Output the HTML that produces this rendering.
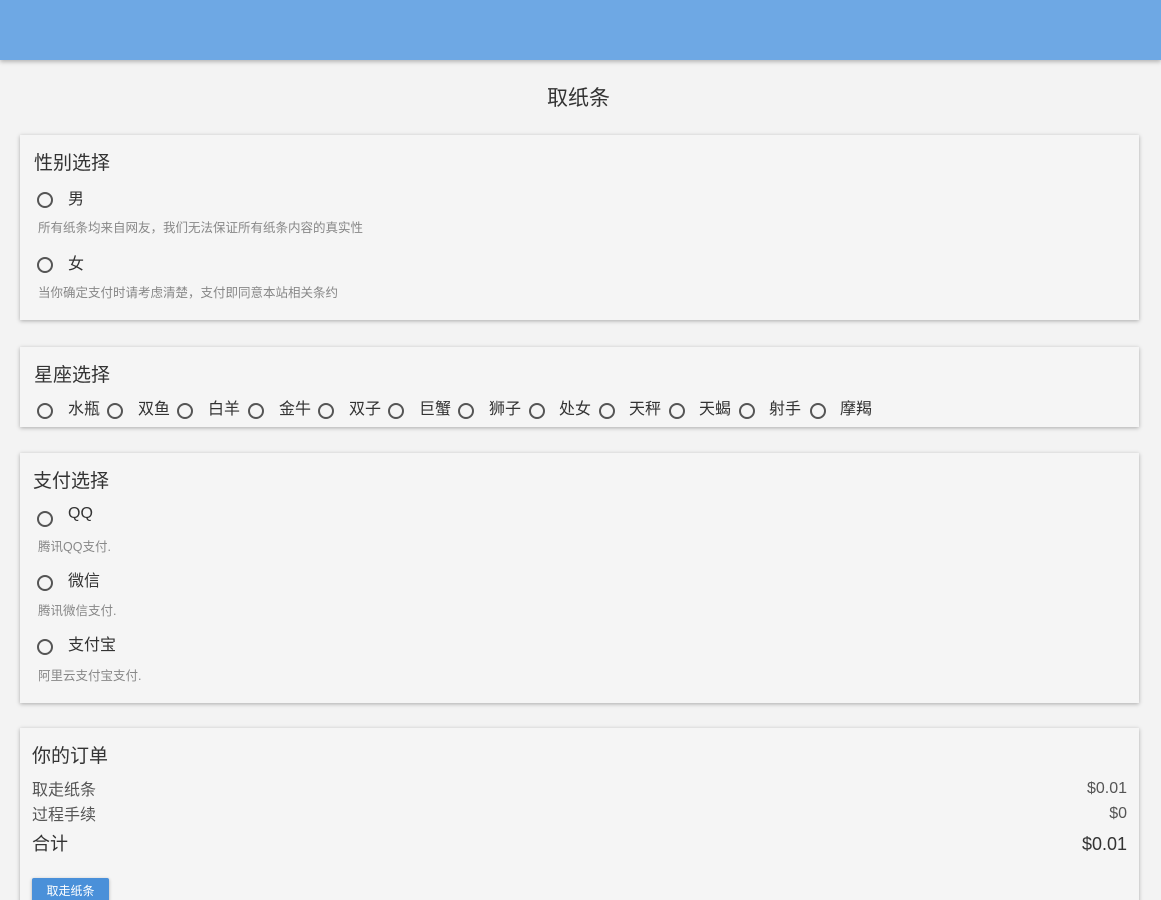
<!DOCTYPE html>
<html style="overflow:hidden"><head><meta charset="utf-8"><style>
html,body{height:900px}
body{margin:0;width:1161px;overflow:hidden;background:#f3f3f3;font-family:"Liberation Sans","Noto Sans CJK SC",sans-serif;color:#333;position:relative}
.a{position:absolute;white-space:nowrap}
.hd{position:absolute;left:0;top:0;width:1161px;height:60px;background:#6ea8e4;box-shadow:0 2px 4px rgba(0,0,0,.25)}
.card{position:absolute;left:20px;width:1119px;background:#f5f5f5;box-shadow:0 1px 4px rgba(0,0,0,.3)}
.r{position:absolute;width:12px;height:12px;border:2px solid #555;border-radius:50%}
.t{font-size:19px;color:#333}
.l{font-size:16px;color:#333}
.s{font-size:12.5px;color:#888}
</style></head><body>
<div class="hd"></div>
<div class="a" style="left:547px;top:82px;font-size:21px;color:#333">取纸条</div>

<div class="card" style="top:135px;height:185px"></div>
<div class="a t" style="left:34px;top:148px">性别选择</div>
<div class="r" style="left:37px;top:192px"></div><div class="a l" style="left:68px;top:185px">男</div>
<div class="a s" style="left:38px;top:217px">所有纸条均来自网友，我们无法保证所有纸条内容的真实性</div>
<div class="r" style="left:37px;top:257px"></div><div class="a l" style="left:68px;top:250px">女</div>
<div class="a s" style="left:38px;top:282px">当你确定支付时请考虑清楚，支付即同意本站相关条约</div>

<div class="card" style="top:347px;height:80px"></div>
<div class="a t" style="left:34px;top:360px">星座选择</div>
<div class="r" style="left:37px;top:403px"></div><div class="a l" style="left:68px;top:395px">水瓶</div>
<div class="r" style="left:107px;top:403px"></div><div class="a l" style="left:138px;top:395px">双鱼</div>
<div class="r" style="left:177px;top:403px"></div><div class="a l" style="left:208px;top:395px">白羊</div>
<div class="r" style="left:248px;top:403px"></div><div class="a l" style="left:279px;top:395px">金牛</div>
<div class="r" style="left:318px;top:403px"></div><div class="a l" style="left:349px;top:395px">双子</div>
<div class="r" style="left:388px;top:403px"></div><div class="a l" style="left:419px;top:395px">巨蟹</div>
<div class="r" style="left:458px;top:403px"></div><div class="a l" style="left:489px;top:395px">狮子</div>
<div class="r" style="left:529px;top:403px"></div><div class="a l" style="left:559px;top:395px">处女</div>
<div class="r" style="left:599px;top:403px"></div><div class="a l" style="left:629px;top:395px">天秤</div>
<div class="r" style="left:669px;top:403px"></div><div class="a l" style="left:699px;top:395px">天蝎</div>
<div class="r" style="left:739px;top:403px"></div><div class="a l" style="left:769px;top:395px">射手</div>
<div class="r" style="left:810px;top:403px"></div><div class="a l" style="left:840px;top:395px">摩羯</div>

<div class="card" style="top:453px;height:250px"></div>
<div class="a t" style="left:33px;top:466px">支付选择</div>
<div class="r" style="left:37px;top:511px"></div><div class="a l" style="left:68px;top:505px">QQ</div>
<div class="a s" style="left:38px;top:536px">腾讯QQ支付.</div>
<div class="r" style="left:37px;top:575px"></div><div class="a l" style="left:68px;top:567px">微信</div>
<div class="a s" style="left:38px;top:600px">腾讯微信支付.</div>
<div class="r" style="left:37px;top:639px"></div><div class="a l" style="left:68px;top:631px">支付宝</div>
<div class="a s" style="left:38px;top:665px">阿里云支付宝支付.</div>

<div class="card" style="top:728px;height:180px"></div>
<div class="a t" style="left:32px;top:741px">你的订单</div>
<div class="a" style="left:32px;top:776px;font-size:16px;color:#555">取走纸条</div>
<div class="a" style="right:34px;top:780px;font-size:16px;color:#555">$0.01</div>
<div class="a" style="left:32px;top:801px;font-size:16px;color:#555">过程手续</div>
<div class="a" style="right:34px;top:805px;font-size:16px;color:#555">$0</div>
<div class="a" style="left:32px;top:830px;font-size:18px;color:#333">合计</div>
<div class="a" style="right:34px;top:834px;font-size:18px;color:#333">$0.01</div>
<div class="a" style="left:32px;top:878px;width:77px;height:26px;background:#4a90d9;color:#fff;font-size:12px;line-height:26px;text-align:center;border-radius:2px;box-shadow:0 1px 3px rgba(0,0,0,.3)">取走纸条</div>
</body></html>
